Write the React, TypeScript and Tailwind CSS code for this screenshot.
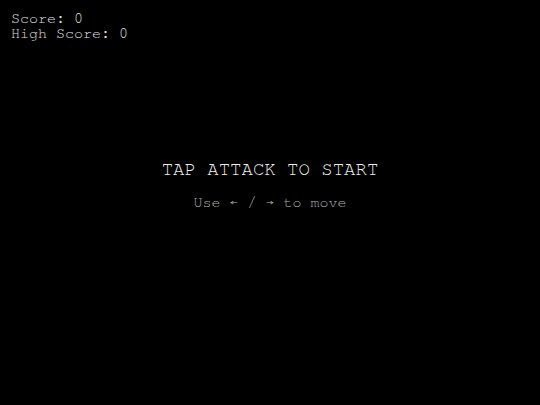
export default function App() {
  return (
    <div className="w-[540px] h-[405px] bg-black flex flex-col" style={{ fontFamily: 'FreeMono, "Liberation Mono", monospace' }}>
      <div className="pt-[11px] pl-[11px] text-[15px] leading-[15px] text-[#e0e0e0]">
        <div>Score: 0</div>
        <div>High Score: 0</div>
      </div>
      <div className="flex flex-col items-center pt-[119px]">
        <div className="text-[19px] leading-[20px] text-[#eeeeee]">TAP ATTACK TO START</div>
        <div className="mt-[14px] text-[15px] leading-[18px] text-[#b0b0b0]">Use ← / → to move</div>
      </div>
    </div>
  );
}
